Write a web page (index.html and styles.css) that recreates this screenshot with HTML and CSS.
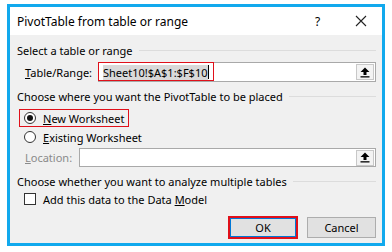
FILE: index.html
```html
<!DOCTYPE html>
<html lang="en">
<head>
  <meta charset="UTF-8" />
  <title>PivotTable from table or range</title>
  <link rel="stylesheet" href="styles.css">
</head>
<body>
  <div class="dialog">
    <div class="titlebar">
      <span class="title">PivotTable from table or range</span>
      <span class="help">?</span>
      <span class="close">
        <svg width="12" height="12" viewBox="0 0 12 12"><path d="M1 1L11 11M11 1L1 11" stroke="#222" stroke-width="1.1" fill="none"/></svg>
      </span>
    </div>

    <div class="content">
      <div class="group">Select a table or range<span class="rule"></span></div>
      <div class="row field-row">
        <span class="label range-label"><u>T</u>able/Range:</span>
        <div class="field">
          <span class="value"><span class="sel">Sheet10!$A$1:$F$10</span><span class="caret"></span></span>
          <span class="pick">
            <svg width="10" height="11" viewBox="0 0 10 11"><path d="M5 0.5L9.5 5H6.5V8H3.5V5H0.5Z" fill="#000"/><rect x="0.5" y="9.2" width="9" height="1.3" fill="#000"/></svg>
          </span>
        </div>
        <span class="mark mark-range"></span>
      </div>

      <div class="group g2">Choose where you want the PivotTable to be placed<span class="rule"></span></div>
      <label class="option marked">
        <span class="radio on"></span><span><u>N</u>ew Worksheet</span>
      </label>
      <label class="option second">
        <span class="radio"></span><span><u>E</u>xisting Worksheet</span>
      </label>
      <div class="row loc-row">
        <span class="label disabled"><u>L</u>ocation:</span>
        <div class="field loc-field">
          <span class="value"></span>
          <span class="pick">
            <svg width="10" height="11" viewBox="0 0 10 11"><path d="M5 0.5L9.5 5H6.5V8H3.5V5H0.5Z" fill="#000"/><rect x="0.5" y="9.2" width="9" height="1.3" fill="#000"/></svg>
          </span>
        </div>
      </div>

      <div class="group g3">Choose whether you want to analyze multiple tables<span class="rule"></span></div>
      <label class="option check-row">
        <span class="checkbox"></span><span>Add this data to the Data <u>M</u>odel</span>
      </label>

      <div class="buttons">
        <button class="btn ok">OK</button>
        <button class="btn">Cancel</button>
      </div>
      <span class="grip"></span>
    </div>
  </div>
</body>
</html>
```

FILE: styles.css
```css
body {
  margin: 0;
  background: #fff;
  font-family: "Noto Sans", "Open Sans", sans-serif;
  font-size: 11px;
  color: #000;
}

.dialog {
  margin: 4px 0 0 7px;
  width: 372px;
  border: 3px solid #11a9ed;
}

.titlebar {
  height: 28px;
  background: #fff;
  display: flex;
  align-items: center;
  padding-left: 7px;
  font-size: 12px;
}

.title {
  flex: 1;
}

.help {
  width: 16px;
  margin-right: 24px;
  font-size: 12px;
}

.close {
  width: 12px;
  margin-right: 15px;
  display: flex;
}

.content {
  position: relative;
  background: #f0f0f0;
  height: 208px;
  padding: 0 6px 0 7px;
}

.group {
  height: 18px;
  padding-top: 6px;
  display: flex;
  align-items: center;
}

.group .rule {
  flex: 1;
  margin-left: 6px;
  border-top: 1px solid #dcdcdc;
}

.g2,
.g3 {
  padding-top: 5px;
}

.row {
  display: flex;
  align-items: center;
}

.field-row {
  margin-top: 3px;
  height: 20px;
}

.label {
  margin-left: 8px;
}

.range-label {
  width: 73px;
}

.disabled {
  color: #8a8a8a;
  width: 54px;
}

.field {
  flex: 1;
  height: 20px;
  box-sizing: border-box;
  border: 1px solid #a9a9a9;
  background: #fff;
  display: flex;
  align-items: center;
  position: relative;
}

.value {
  flex: 1;
  padding-left: 4px;
  display: flex;
  align-items: center;
}

.sel {
  background: #d9d9d9;
  line-height: 15px;
}

.caret {
  width: 1px;
  height: 14px;
  background: #000;
}

.pick {
  width: 18px;
  height: 16px;
  margin-right: 1px;
  box-sizing: border-box;
  border: 1px solid #c8c8c8;
  background: #f3f3f3;
  display: flex;
  align-items: center;
  justify-content: center;
}

.mark-range {
  position: absolute;
  left: 88px;
  top: 27px;
  width: 116px;
  height: 19px;
  border: 1px solid #e0101a;
  box-sizing: border-box;
}

.option {
  display: flex;
  align-items: center;
  height: 18px;
  box-sizing: border-box;
  padding-left: 7px;
}

.option.marked {
  margin-top: 4px;
  margin-left: 2px;
  width: 110px;
  border: 1px solid #e0101a;
  padding-left: 4px;
}

.option.second {
  margin-top: 1px;
}

.radio {
  width: 12px;
  height: 12px;
  box-sizing: border-box;
  border: 1px solid #333;
  border-radius: 50%;
  background: #fff;
  margin-right: 7px;
  display: flex;
  align-items: center;
  justify-content: center;
}

.radio.on::after {
  content: "";
  width: 6px;
  height: 6px;
  border-radius: 50%;
  background: #111;
}

.loc-row {
  margin-top: 2px;
  height: 19px;
}

.loc-field {
  height: 19px;
}

.check-row {
  height: 18px;
}

.checkbox {
  width: 12px;
  height: 12px;
  box-sizing: border-box;
  border: 1px solid #333;
  background: #fff;
  margin-right: 7px;
}

.buttons {
  margin-top: 9px;
  display: flex;
  justify-content: flex-end;
  gap: 10px;
}

.btn {
  width: 69px;
  height: 21px;
  box-sizing: border-box;
  border: 1px solid #adadad;
  background: #e1e1e1;
  font-family: inherit;
  font-size: 11px;
  padding: 0;
}

.btn.ok {
  width: 68px;
  border: 1px solid #0078d7;
  outline: 2px solid #e0101a;
  outline-offset: -1px;
  box-shadow: inset 0 0 0 1px #0078d7;
}

.grip {
  position: absolute;
  right: 1px;
  bottom: 1px;
  width: 6px;
  height: 6px;
  background-image: radial-gradient(#b5b5b5 45%, transparent 50%);
  background-size: 2px 2px;
}
```
